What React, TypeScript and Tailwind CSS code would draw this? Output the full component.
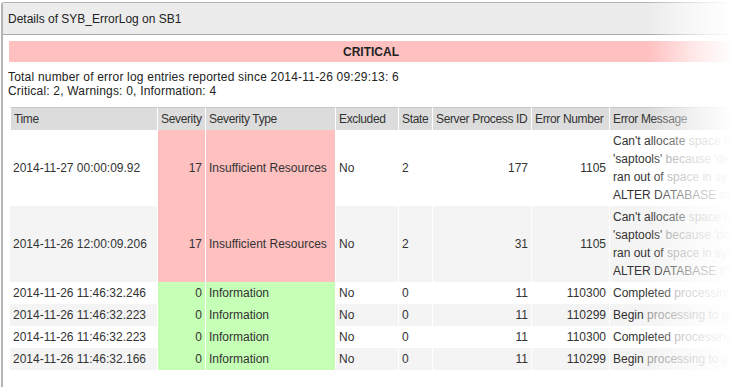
import React from 'react'

type Row = {
  time: string
  severity: number
  type: string
  state: number
  spid: number
  errNo: number
  msg: [string, string][]
  critical: boolean
}

const bigMsg: [string, string][] = [
  ["Can't allocate", " space for object 'syslogs' in database"],
  ["'saptools'", " because 'default' segment is full/has no free extents. If you"],
  ['ran out of', ' space in syslogs, dump the transaction log. Otherwise, use'],
  ['ALTER DATABASE', ' to increase the size of the segment.'],
]

const rows: Row[] = [
  { time: '2014-11-27 00:00:09.92', severity: 17, type: 'Insufficient Resources', state: 2, spid: 177, errNo: 1105, msg: bigMsg, critical: true },
  { time: '2014-11-26 12:00:09.206', severity: 17, type: 'Insufficient Resources', state: 2, spid: 31, errNo: 1105, msg: bigMsg, critical: true },
  { time: '2014-11-26 11:46:32.246', severity: 0, type: 'Information', state: 0, spid: 11, errNo: 110300, msg: [['Completed', ' processing to generate the statistics']], critical: false },
  { time: '2014-11-26 11:46:32.223', severity: 0, type: 'Information', state: 0, spid: 11, errNo: 110299, msg: [['Begin', ' processing to generate the statistics']], critical: false },
  { time: '2014-11-26 11:46:32.223', severity: 0, type: 'Information', state: 0, spid: 11, errNo: 110300, msg: [['Completed', ' processing to generate the statistics']], critical: false },
  { time: '2014-11-26 11:46:32.166', severity: 0, type: 'Information', state: 0, spid: 11, errNo: 110299, msg: [['Begin', ' processing to generate the statistics']], critical: false },
]

const headers = ['Time', 'Severity', 'Severity Type', 'Excluded', 'State', 'Server Process ID', 'Error Number', 'Error Message']

// every cell: 3px side padding, 18px lines, white 1px divider on the left
const cell = 'flex items-center px-[3px] py-[2px] leading-[18px] border-l border-l-white whitespace-nowrap'

export default function App() {
  return (
    <div className="relative w-[733px] h-[387px] overflow-hidden bg-white font-['Liberation_Sans',Arial,sans-serif] text-[12px] text-[#333]">
      <div className="mt-[2px] ml-[1px] h-[385px] flex flex-col border-t border-l-2 border-[#b4b4b4] rounded-tl-[3px]">
        {/* title bar */}
        <div className="h-[32px] shrink-0 flex items-center pl-[5px] bg-[#ececec] border-b border-[#a9a9a9] text-[#222]">
          Details of SYB_ErrorLog on SB1
        </div>

        <div className="flex flex-col">
          <div className="mt-[6px] ml-[6px] h-[21px] flex items-center justify-center bg-[#ffc0c0] font-bold text-[#222]">
            CRITICAL
          </div>

          <div className="mt-[8px] pl-[5px] leading-[14px] text-[#222] tracking-[0.2px]">
            <div>Total number of error log entries reported since 2014-11-26 09:29:13: 6</div>
            <div>Critical: 2, Warnings: 0, Information: 4</div>
          </div>

          <div className="mt-[9px] ml-[7px] w-[999px] grid grid-cols-[147px_48px_130px_63px_34px_99px_78px_400px]">
            {headers.map((h, i) => (
              <div
                key={h}
                className={`${cell} bg-[#dcdcdc] border-t border-t-[#c6c6c6] tracking-[-0.35px] overflow-hidden ${
                  i === 0 ? 'border-l-[#cfcfcf]' : ''
                }`}
              >
                {h}
              </div>
            ))}
            {rows.map((r, i) => {
              const zebra = i % 2 === 1 ? 'bg-[#f4f4f4]' : 'bg-white'
              const sev = r.critical ? 'bg-[#ffc0c0]' : 'bg-[#c6ffb6]'
              return (
                <React.Fragment key={i}>
                  <div className={`${cell} ${zebra} border-l-0`}>{r.time}</div>
                  <div className={`${cell} ${sev} justify-end`}>{r.severity}</div>
                  <div className={`${cell} ${sev}`}>{r.type}</div>
                  <div className={`${cell} ${zebra}`}>No</div>
                  <div className={`${cell} ${zebra}`}>{r.state}</div>
                  <div className={`${cell} ${zebra} justify-end`}>{r.spid}</div>
                  <div className={`${cell} ${zebra} justify-end`}>{r.errNo}</div>
                  <div className={`${cell} ${zebra} flex-col items-start overflow-hidden`}>
                    {r.msg.map(([dark, light], j) => (
                      <div key={j}>
                        <span className="text-[#333]">{dark}</span>
                        <span className="text-[#9a9a9a]">{light}</span>
                      </div>
                    ))}
                  </div>
                </React.Fragment>
              )
            })}
          </div>
        </div>
      </div>

      {/* right edge fade */}
      <div className="pointer-events-none absolute inset-y-0 right-0 w-[85px] bg-linear-to-r from-white/0 via-white/60 to-white" />
    </div>
  )
}
